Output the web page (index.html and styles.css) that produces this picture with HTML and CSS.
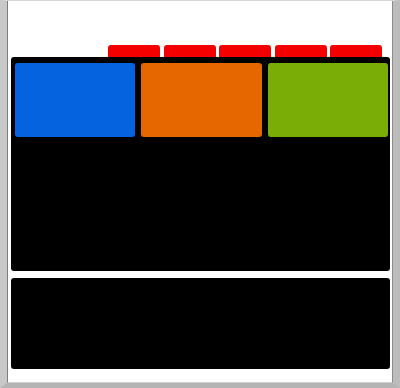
FILE: index.html
```html
<!DOCTYPE html>
<html lang="en">
<head>
    <meta charset="UTF-8">
    <meta name="viewport" content="width=device-width, initial-scale=1.0">
    <title>Dashboard</title>
    <link rel="stylesheet" href="styles.css">
</head>
<body>
    <div class="frame">
        <div class="window">
            <!-- tab strip -->
            <div class="tabs">
                <span class="tab"></span>
                <span class="tab"></span>
                <span class="tab"></span>
                <span class="tab"></span>
                <span class="tab"></span>
            </div>

            <!-- main panel -->
            <div class="panel main">
                <div class="tile blue"></div>
                <div class="tile orange"></div>
                <div class="tile green"></div>
            </div>

            <!-- footer panel -->
            <div class="panel footer"></div>
        </div>
    </div>
</body>
</html>
```

FILE: styles.css
```css
body { margin: 0; background: #fff; font-family: "Liberation Sans", Arial, sans-serif; }
.frame { width: 400px; height: 388px; box-sizing: border-box; border-top: 1px solid #d6d6d6; border-left: 7px solid #c8c8c8; border-right: 7px solid #bcbcbc; border-bottom: 5px solid #b4b4b4; }
.window { height: 100%; box-sizing: border-box; background: #fff; border-left: 1px solid #7c7c7c; border-right: 1px solid #8c8c8c; border-bottom: 1px solid #cfcfcf; padding: 44px 2px 0 3px; }
.tabs { display: flex; justify-content: flex-end; gap: 3.5px; height: 12px; padding-right: 8px; }
.tab { flex: 0 0 52px; background: #f50000; border-radius: 3px 3px 0 0; }
.panel { background: #000; border-radius: 3px; }
.main { height: 214px; box-sizing: border-box; padding: 6px 2px 0 4px; display: grid; grid-template-columns: 1fr 1fr 1fr; gap: 6px; align-items: start; }
.tile { height: 74px; border-radius: 3px; }
.blue { background: #0563e0; }
.orange { background: #e66700; }
.green { background: #7aae06; }
.footer { height: 91px; margin-top: 7px; }
```
